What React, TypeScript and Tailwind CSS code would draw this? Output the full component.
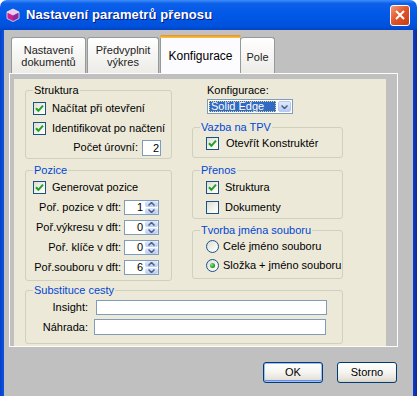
import React from "react";

const Check = ({ checked }: { checked?: boolean }) => (
  <span className="w-[13px] h-[13px] border border-[#1c5180] bg-[linear-gradient(135deg,#dcdcd7_0%,#f4f4f0_60%,#ffffff_100%)] flex items-center justify-center shrink-0">
    {checked && (
      <svg width="9" height="9" viewBox="0 0 9 9">
        <path d="M1 4.2 L3.4 6.8 L8 1.6" stroke="#21a121" strokeWidth="2" fill="none" />
      </svg>
    )}
  </span>
);

const Radio = ({ checked }: { checked?: boolean }) => (
  <span className="w-[13px] h-[13px] rounded-full border border-[#1c5180] bg-[linear-gradient(135deg,#dcdcd7_0%,#f4f4f0_60%,#ffffff_100%)] flex items-center justify-center shrink-0">
    {checked && <span className="w-[5px] h-[5px] rounded-full bg-[radial-gradient(circle_at_35%_35%,#8ee28e,#21a121_60%,#137813)]" />}
  </span>
);

const Arrow = ({ up }: { up?: boolean }) => (
  <svg width="7" height="4" viewBox="0 0 7 4">
    <path d={up ? "M0.5 3.5 L3.5 0.5 L6.5 3.5" : "M0.5 0.5 L3.5 3.5 L6.5 0.5"} stroke="#4d6185" strokeWidth="1.5" fill="none" />
  </svg>
);

const Spin = ({ v }: { v: string }) => (
  <div className="w-[35px] h-[15px] border border-[#7f9db9] bg-white flex items-center">
    <span className="flex-1 text-right pr-[2px] leading-[13px]">{v}</span>
    <div className="w-[13px] h-[13px] flex flex-col gap-[1px]">
      <div className="flex-1 bg-[linear-gradient(to_bottom,#e1eafe,#b9cbf3)] rounded-[2px] flex items-center justify-center">
        <Arrow up />
      </div>
      <div className="flex-1 bg-[linear-gradient(to_bottom,#e1eafe,#b9cbf3)] rounded-[2px] flex items-center justify-center">
        <Arrow />
      </div>
    </div>
  </div>
);

const Group = ({
  title,
  blue,
  h,
  className,
  children,
}: {
  title: string;
  blue?: boolean;
  h: string;
  className?: string;
  children: React.ReactNode;
}) => (
  <div className={`border border-[#d0d0bf] rounded-[3px] flex flex-col ${h} ${className ?? ""}`}>
    <div className={`-mt-[7px] ml-[7px] px-[1px] bg-[#ece9d8] w-fit leading-[13px] ${blue ? "text-[#0046d5]" : "text-black"}`}>
      {title}
    </div>
    {children}
  </div>
);

const Btn = ({ label, def }: { label: string; def?: boolean }) => (
  <div
    className={`w-[60px] h-[21px] rounded-[3px] border border-[#003c74] bg-[linear-gradient(to_bottom,#ffffff_0%,#f4f4f0_50%,#e6e3da_85%,#d6d0c5_100%)] flex items-center justify-center ${
      def ? "shadow-[inset_0_0_0_1px_#9fbcf5,inset_0_-1px_0_1px_#6c8fe6]" : ""
    }`}
  >
    {label}
  </div>
);

export default function App() {
  return (
    <div className="w-[417px] h-[396px] bg-white overflow-hidden font-['Liberation_Sans',Arial,sans-serif] text-[11px] text-black">
      <div className="h-full flex flex-col rounded-t-[7px] overflow-hidden">
        {/* Title bar */}
        <div className="h-[30px] shrink-0 flex items-center pl-[5px] pr-[7px] bg-[linear-gradient(to_bottom,#3d8ef9_0%,#0d5fe9_12%,#0058e6_50%,#0051dc_88%,#0044c4_100%)]">
          <svg width="16" height="16" viewBox="0 0 16 16" className="shrink-0">
            <path d="M8 2 L14 5 L8 8 L2 5 Z" fill="#f4c8ee" />
            <path d="M2 5 L8 8 L8 14.5 L2 11.5 Z" fill="#d0208e" />
            <path d="M14 5 L8 8 L8 14.5 L14 11.5 Z" fill="#8a2a9e" />
            <path d="M8 2 L14 5 L8 8 L2 5 Z M2 5 L2 11.5 L8 14.5 L14 11.5 L14 5" stroke="#ffffff" strokeWidth="0.7" fill="none" />
          </svg>
          <span className="ml-[5px] text-white font-bold text-[13px] tracking-[0.1px] [text-shadow:1px_1px_0_#0a1883]">
            Nastavení parametrů přenosu
          </span>
          <div className="ml-auto w-[20px] h-[21px] rounded-[3px] border border-white bg-[linear-gradient(135deg,#f09c7c_0%,#e2582c_45%,#c63c16_100%)] flex items-center justify-center">
            <svg width="10" height="10" viewBox="0 0 10 10">
              <path d="M1 1 L9 9 M9 1 L1 9" stroke="#ffffff" strokeWidth="2" />
            </svg>
          </div>
        </div>

        {/* Body */}
        <div className="flex-1 flex">
          <div className="w-[4px] bg-[linear-gradient(to_right,#0a3fc8,#0855e0)]" />
          <div className="flex-1 bg-[#c0c0c0] flex flex-col pt-[5px] pl-[5px]">
            {/* Tabs */}
            <div className="h-[38px] flex items-end ml-[2px] text-[#222]">
              <div className="w-[75px] h-[36px] rounded-t-[3px] border border-b-0 border-[#919b9c] bg-[linear-gradient(to_bottom,#ffffff,#ecebe6)] flex flex-col items-center justify-center leading-[12px] pt-[1px]">
                <span>Nastavení</span>
                <span>dokumentů</span>
              </div>
              <div className="w-[72px] h-[36px] ml-[1px] rounded-t-[3px] border border-b-0 border-[#919b9c] bg-[linear-gradient(to_bottom,#ffffff,#ecebe6)] flex flex-col items-center justify-center leading-[12px] pt-[1px]">
                <span>Předvyplnit</span>
                <span>výkres</span>
              </div>
              <div className="w-[81px] h-[38px] ml-[1px] rounded-t-[3px] border-x border-[#919b9c] bg-[#fcfcfe] flex flex-col text-black">
                <div className="h-[3px] rounded-t-[2px] bg-[linear-gradient(to_bottom,#e68b2c,#ffc73c)] -mx-px" />
                <div className="flex-1 flex items-center justify-center text-[12px] pt-[1px]">Konfigurace</div>
              </div>
              <div className="w-[34px] h-[36px] rounded-t-[3px] border border-b-0 border-l-0 border-[#919b9c] bg-[linear-gradient(to_bottom,#ffffff,#ecebe6)] flex items-center justify-center pt-[3px]">
                Pole
              </div>
            </div>

            {/* Panel */}
            <div className="w-[389px] h-[274px] border border-[#fcfcfe] pt-[5px] pl-[4px] pr-[11px]">
              <div className="h-[267px] bg-[#ece9d8] pl-[11px] flex flex-col">
                <div className="h-[202px] flex gap-[20px]">
                  {/* Left column */}
                  <div className="w-[147px] pt-[11px] flex flex-col">
                    <Group title="Struktura" h="h-[69px]">
                      <div className="h-[20px] flex items-center pl-[7px] gap-[6px] mt-px">
                        <Check checked />
                        <span>Načítat při otevření</span>
                      </div>
                      <div className="h-[20px] flex items-center pl-[7px] gap-[6px]">
                        <Check checked />
                        <span>Identifikovat po načtení</span>
                      </div>
                      <div className="h-[19px] flex items-center justify-end pr-[10px] gap-[4px]">
                        <span>Počet úrovní:</span>
                        <div className="w-[19px] h-[16px] border border-[#7f9db9] bg-white text-right pr-[1px] leading-[14px]">2</div>
                      </div>
                    </Group>
                    <Group title="Pozice" blue h="h-[111px]" className="mt-[11px]">
                      <div className="h-[20px] flex items-center pl-[7px] gap-[6px]">
                        <Check checked />
                        <span>Generovat pozice</span>
                      </div>
                      {[
                        ["Poř. pozice v dft:", "1"],
                        ["Poř.výkresu v dft:", "0"],
                        ["Poř. klíče v dft:", "0"],
                        ["Poř.souboru v dft:", "6"],
                      ].map(([l, v]) => (
                        <div key={l} className="h-[20px] flex items-center">
                          <span className="w-[95px] text-right">{l}</span>
                          <span className="w-[3px]" />
                          <Spin v={v} />
                        </div>
                      ))}
                    </Group>
                  </div>

                  {/* Right column */}
                  <div className="w-[151px] pt-[5px] flex flex-col">
                    <div className="pl-[15px] leading-[13px]">Konfigurace:</div>
                    <div className="ml-[15px] mt-[2px] w-[86px] h-[15px] border border-[#7f9db9] bg-white flex items-center p-[1px] gap-[2px]">
                      <div className="w-[67px] h-full bg-[#316ac5] text-white outline outline-1 outline-dotted outline-[#e8d87a] -outline-offset-1 flex items-center pl-[2px] leading-[11px]">
                        Solid Edge
                      </div>
                      <div className="w-[13px] h-full rounded-[2px] bg-[linear-gradient(to_bottom,#e1eafe,#b9cbf3)] border border-[#b8c8ee] flex items-center justify-center">
                        <Arrow />
                      </div>
                    </div>
                    <Group title="Vazba na TPV" blue h="h-[31px]" className="mt-[13px]">
                      <div className="h-[19px] flex items-center pl-[13px] gap-[7px]">
                        <Check checked />
                        <span>Otevřít Konstruktér</span>
                      </div>
                    </Group>
                    <Group title="Přenos" blue h="h-[49px]" className="mt-[12px]">
                      <div className="h-[20px] flex items-center pl-[13px] gap-[6px]">
                        <Check checked />
                        <span>Struktura</span>
                      </div>
                      <div className="h-[20px] flex items-center pl-[13px] gap-[6px]">
                        <Check />
                        <span>Dokumenty</span>
                      </div>
                    </Group>
                    <Group title="Tvorba jména souboru" blue h="h-[49px]" className="mt-[11px]">
                      <div className="h-[19px] flex items-center pl-[13px] gap-[4px]">
                        <Radio />
                        <span>Celé jméno souboru</span>
                      </div>
                      <div className="h-[19px] flex items-center pl-[13px] gap-[4px]">
                        <Radio checked />
                        <span>Složka + jméno souboru</span>
                      </div>
                    </Group>
                  </div>
                </div>

                <Group title="Substituce cesty" blue h="h-[54px]" className="mt-[9px] w-[318px]">
                  <div className="h-[20px] flex items-center">
                    <span className="w-[62px] text-right">Insight:</span>
                    <div className="ml-[8px] w-[231px] h-[15px] border border-[#7f9db9] bg-white" />
                  </div>
                  <div className="h-[20px] flex items-center">
                    <span className="w-[62px] text-right">Náhrada:</span>
                    <div className="ml-[6px] w-[232px] h-[16px] border border-[#7f9db9] bg-white" />
                  </div>
                </Group>
              </div>
            </div>

            {/* Buttons */}
            <div className="mt-[15px] flex justify-end gap-[14px] pr-[16px]">
              <Btn label="OK" def />
              <Btn label="Storno" />
            </div>
          </div>
          <div className="w-[4px] bg-[linear-gradient(to_right,#0a40c8,#0a2a9a)]" />
        </div>
      </div>
    </div>
  );
}
